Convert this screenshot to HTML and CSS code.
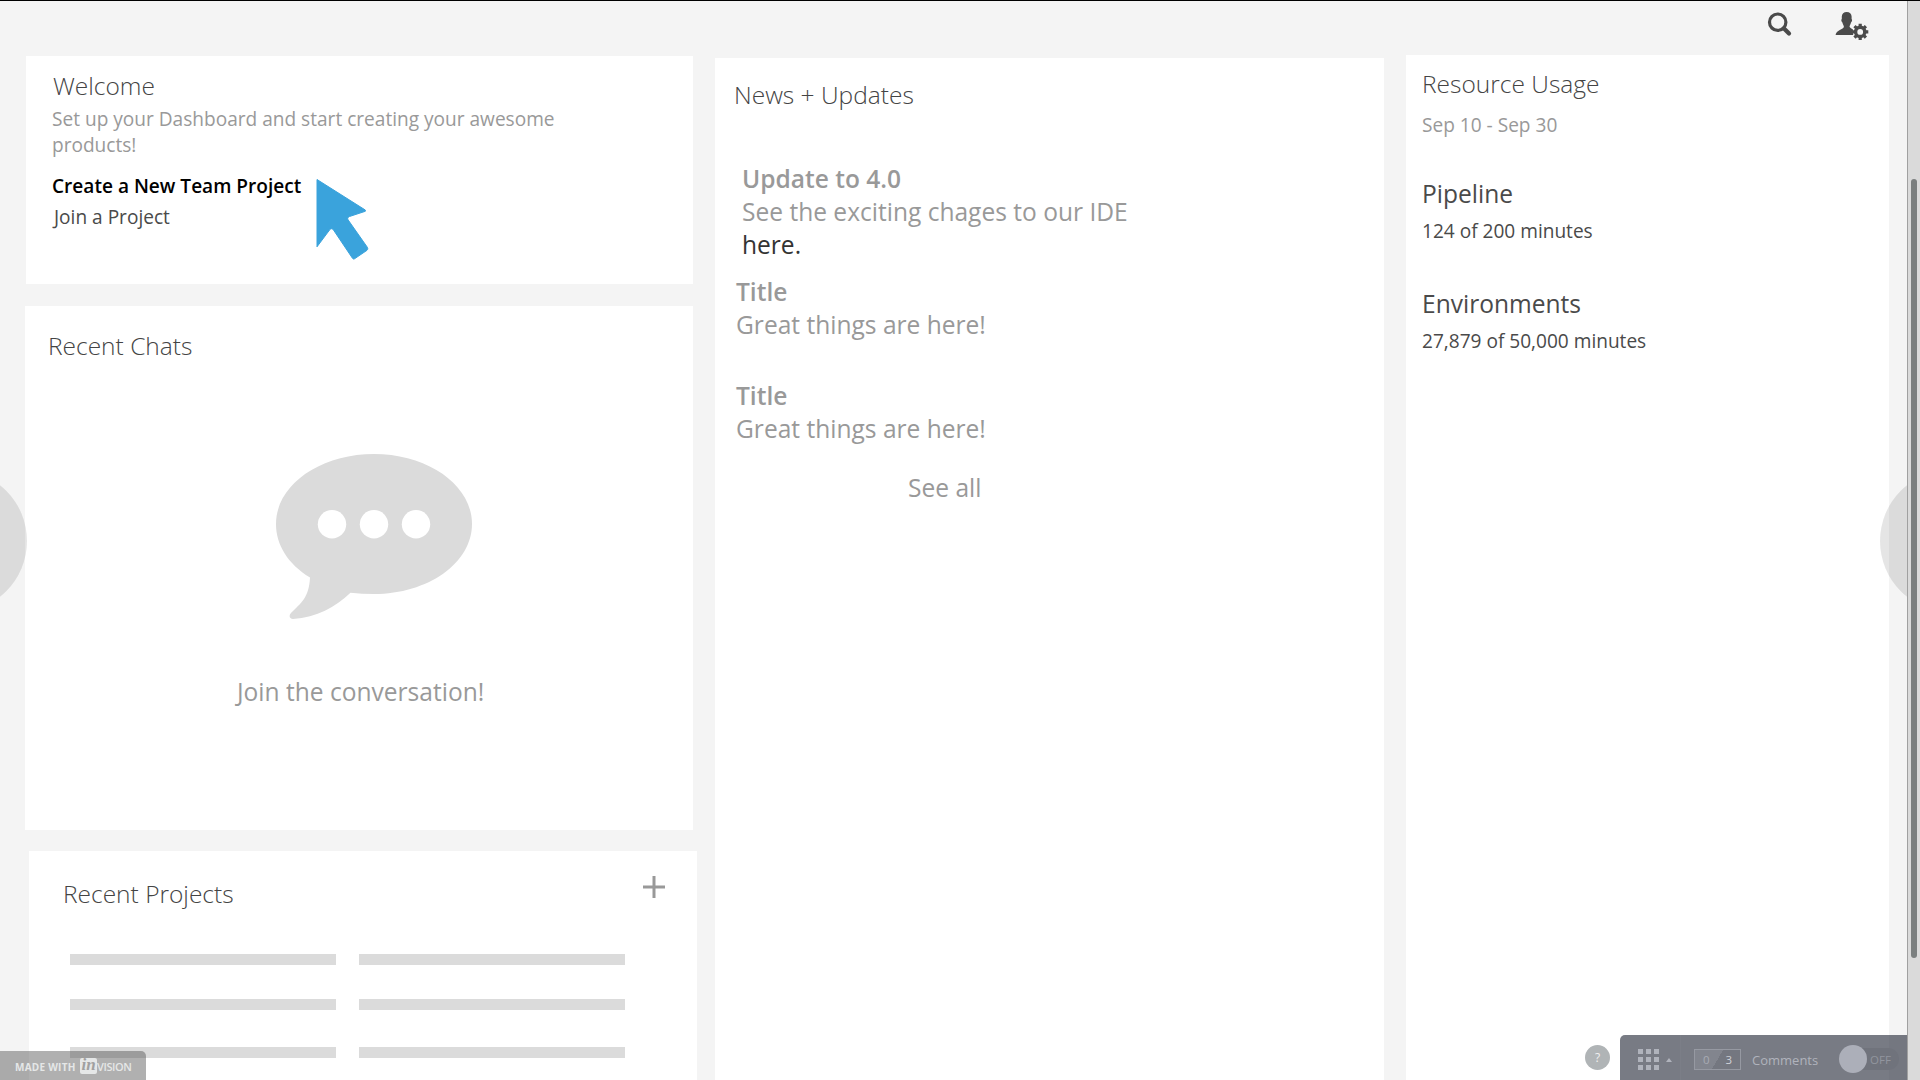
FILE: index.html
```
<!DOCTYPE html>
<html lang="en">
<head>
<meta charset="utf-8">
<title>Dashboard</title>
<link rel="stylesheet" href="styles.css">
</head>
<body>
<div class="viewport">
  <div class="page">
    <header class="topbar">
      <svg class="icon-search" width="26" height="26" viewBox="0 0 26 26" fill="none" stroke="#4a4a4a">
        <circle cx="10.7" cy="11.2" r="8.2" stroke-width="3.2"/>
        <path d="M17 17.5L22 22.500" stroke-width="4.2" stroke-linecap="round"/>
      </svg>
      <svg class="icon-user" width="34" height="30" viewBox="0 0 34 30">
        <path fill="#4a4a4a" d="M11.7 1C14.6 1 16.6 2.7 16.6 5.6V8C17.6 8.5 16.9 11 16 11.4C15.5 13.5 14.5 14.6 14.5 15.5C14.8 17.8 21 18.5 21.5 24H.6C1 19.5 8.6 18.300 8.900 15.800C8.900 14.600 7.900 13.500 7.400 11.400C6.500 11 5.800 8.500 6.800 8V5.600C6.800 2.700 8.800 1 11.700 1Z"/>
        <circle cx="25.2" cy="20.9" r="7.5" fill="#f4f4f4"/>
        <g stroke="#4a4a4a" fill="none">
          <circle cx="25.2" cy="20.9" r="4.6" stroke-width="3.4"/>
          <path stroke-width="3.2" d="M25.2 12.8V16M25.2 25.8V29M17.1 20.9H20.3M30.1 20.9H33.3M19.5 15.2L21.7 17.4M28.7 24.4L30.9 26.6M30.900 15.200L28.700 17.400M21.700 24.400L19.500 26.600"/>
        </g>
      </svg>
    </header>
    <main class="columns">
      <div class="column-left">
        <section class="card welcome">
          <h2 class="heading">Welcome</h2>
          <p class="intro">Set up your Dashboard and start creating your awesome products!</p>
          <a class="create">Create a New Team Project</a>
          <a class="join">Join a Project</a>
          <svg class="cursor" width="56" height="84" viewBox="0 0 56 84">
            <path fill="#3aa3dc" stroke="#3aa3dc" stroke-linejoin="round" d="M1 1.5L49.300 32L49.300 33.300L33.500 38.500C31.500 39.400 31.200 40.600 32.200 42L51.500 69.500C52 70.700 51.800 71.500 51 72.300L38.500 80.800C37.600 81.300 37 81 36.500 80.300L17.500 52C16.300 50.300 15 50.300 13.700 51.800L1 68.800Z"/>
          </svg>
        </section>
        <section class="card chats">
          <h2 class="heading">Recent Chats</h2>
          <svg class="bubble" width="198" height="168" viewBox="0 0 198 168">
            <path fill="#dbdbdb" d="M99 1C153 1 197 32 197 71S153 141 99 141Q87 141 75.500 139.700C60 154 42 164.500 18 166C14.500 166 13.500 162.500 16 160C26 150 34 145 35 124.500C13 111 1 92 1 71C1 32 45 1 99 1Z"/>
            <g fill="#fff"><circle cx="57" cy="71.300" r="14.200"/><circle cx="99" cy="71.300" r="14.200"/><circle cx="141" cy="71.300" r="14.200"/></g>
          </svg>
          <p class="conversation">Join the conversation!</p>
        </section>
        <section class="card projects">
          <div class="projects-head">
            <h2 class="heading">Recent Projects</h2>
            <svg class="plus" width="22" height="22" viewBox="0 0 22 22"><path d="M11 0V22M0 11H22" stroke="#999" stroke-width="3"/></svg>
          </div>
          <div class="bars">
            <i></i><i></i><i></i><i></i><i></i><i></i>
          </div>
        </section>
      </div>
      <section class="card news">
        <h2 class="heading">News + Updates</h2>
        <article class="item featured">
          <h3>Update to 4.0</h3>
          <p>See the exciting chages to our IDE<br><a>here.</a></p>
        </article>
        <article class="item">
          <h3>Title</h3>
          <p>Great things are here!</p>
        </article>
        <article class="item second">
          <h3>Title</h3>
          <p>Great things are here!</p>
        </article>
        <a class="see-all">See all</a>
      </section>
      <section class="card usage">
        <h2 class="heading">Resource Usage</h2>
        <p class="period">Sep 10 - Sep 30</p>
        <h3>Pipeline</h3>
        <p class="amount">124 of 200 minutes</p>
        <h3>Environments</h3>
        <p class="amount">27,879 of 50,000 minutes</p>
      </section>
    </main>
    <span class="nav-circle prev"></span>
    <span class="nav-circle next"></span>
    <div class="badge"><span>MADE WITH</span><em>in</em><b>VISION</b></div>
    <div class="help">?</div>
    <div class="toolbar">
      <div class="screens">
        <svg width="21" height="21" viewBox="0 0 21 21">
          <path fill="#b0b3bc" d="M0 0h5v5H0zM8 0h5v5H8zM16 0h5v5h-5zM0 8h5v5H0zM8 8h5v5H8zM16 8h5v5h-5zM0 16h5v5H0zM8 16h5v5H8zM16 16h5v5h-5z"/>
        </svg>
        <svg class="caret" width="6" height="4" viewBox="0 0 6 4"><path fill="#b0b3bc" d="M0 4L3 0L6 4Z"/></svg>
      </div>
      <div class="comments">
        <div class="count"><span>0</span><span class="total">3</span></div>
        <span class="label">Comments</span>
        <div class="toggle"><i></i><span>OFF</span></div>
      </div>
    </div>
  </div>
  <div class="scrollbar"><div class="thumb"></div></div>
</div>
</body>
</html>
```
FILE: styles.css
```
* { box-sizing: border-box; }
body, h2, h3, p { margin: 0; }
body {
  font-family: "Open Sans", sans-serif;
  background: #f4f4f4;
  overflow: hidden;
}
svg { display: block; flex: none; }
.viewport {
  display: flex;
  height: 1080px;
  border-top: 1px solid #000;
}
.page {
  position: relative;
  width: 1907px;
  overflow: hidden;
}
.topbar {
  display: flex;
  justify-content: flex-end;
  gap: 42px;
  height: 54px;
  padding: 10px 38px 0 0;
}
.columns {
  display: flex;
  height: 1025px;
}
.card { background: #fff; }
.heading {
  font-weight: 300;
  font-size: 24.5px;
  line-height: 33px;
  color: #444;
}

.column-left { width: 715px; padding-top: 1px; }
.welcome {
  position: relative;
  display: flex;
  flex-direction: column;
  width: 667px;
  height: 228px;
  margin-left: 26px;
  padding: 13px 26px 0;
  font-size: 19.09px;
  line-height: 26px;
}
.welcome .heading { margin-left: 1px; }
.intro { width: 540px; margin-top: 4px; color: #999; }
.create { margin-top: 15px; font-weight: 600; color: #000; }
.join { margin: 5px 0 0 2px; color: #4a4a4a; }
.cursor { position: absolute; left: 290px; top: 122px; }

.chats {
  width: 668px;
  height: 524px;
  margin: 22px 0 0 25px;
  padding: 23px 23px 0;
}
.bubble { margin: 91px 0 0 227px; }
.conversation {
  margin: 54px 0 0 189px;
  font-size: 24.55px;
  line-height: 33px;
  color: #999;
}

.projects {
  width: 668px;
  height: 229px;
  margin: 21px 0 0 29px;
  padding: 25px 32px 0 34px;
}
.projects-head { display: flex; justify-content: space-between; }
.projects .heading { position: relative; top: 1px; }
.bars {
  display: grid;
  grid-template-columns: 266px 266px;
  grid-template-rows: 11px 11px 14px;
  align-items: end;
  gap: 34px 23px;
  padding: 45px 0 0 7px;
}
.bars i { height: 11px; background: #dbdbdb; }

.news {
  width: 669px;
  margin: 3px 22px 0 0;
  padding: 20px 19px 0;
  font-size: 24.55px;
  line-height: 33px;
  color: #999;
}
.item { margin: 14px 0 0 2px; }
.item h3 { font-size: inherit; font-weight: 600; }
.item a { color: #333; }
.item.featured { margin: 51px 0 0 8px; }
.item.second { margin-top: 38px; }
.see-all { display: block; margin: 26px 0 0 174px; }

.usage {
  width: 483px;
  padding: 12px 16px 0;
  color: #4a4a4a;
  font-size: 19.09px;
  line-height: 26px;
}
.period { margin-top: 12px; color: #999; }
.usage h3 {
  margin-top: 39px;
  font-size: 24.55px;
  font-weight: 400;
  line-height: 33px;
}
.amount { margin-top: 8px; }
.amount + h3 { margin-top: 43px; }

.nav-circle {
  position: absolute;
  top: 469px;
  width: 142px;
  height: 142px;
  border-radius: 50%;
  background: rgba(0, 0, 0, .1);
}
.prev { left: -115px; }
.next { left: 1880px; }

.badge {
  position: absolute;
  left: 0;
  bottom: 0;
  display: flex;
  align-items: center;
  width: 146px;
  height: 29px;
  padding: 3px 0 0 15px;
  border-top-right-radius: 5px;
  background: rgba(80, 80, 80, .45);
  color: #e5e7e7;
  font-size: 10px;
  font-weight: 700;
  white-space: nowrap;
}
.badge span { width: 65px; letter-spacing: .25px; }
.badge em {
  width: 17px;
  height: 16px;
  margin-top: -2px;
  border-radius: 2px;
  background: #e5e7e7;
  color: #a0a0a0;
  font: italic 700 17px/14px "Liberation Serif", serif;
  text-align: center;
}
.badge b { font-size: 11px; font-weight: 600; margin-top: -2px; letter-spacing: -.4px; }

.help {
  position: absolute;
  left: 1585px;
  top: 1044px;
  width: 25px;
  height: 25px;
  border-radius: 50%;
  background: #b0b4b6;
  color: #f0f0f0;
  font-size: 12px;
  line-height: 25px;
  text-align: center;
}
.toolbar {
  position: absolute;
  right: 0;
  bottom: 0;
  display: flex;
  width: 287px;
  height: 45px;
  border-top-left-radius: 5px;
  background: linear-gradient(to right, #787b84 269px, #747780 269px);
  color: #b0b3bc;
}
.screens {
  display: flex;
  gap: 7px;
  width: 61px;
  padding: 14px 0 0 18px;
  border-right: 1px solid #7b7e87;
}
.caret { margin-top: 9px; }
.comments {
  display: flex;
  align-items: center;
  padding: 2px 0 0 13px;
  font-size: 13px;
}
.count {
  display: flex;
  width: 47px;
  height: 21px;
  margin-top: 2px;
  border: 1px solid #9699a2;
  background: linear-gradient(120deg, #82858e 50%, #747780 50%);
  font-size: 11.5px;
  line-height: 20px;
  text-align: center;
}
.count span { flex: 1; color: #a8abb4; }
.count .total { color: #d0d2d8; }
.label { width: 87px; margin: 3px 0 0 11px; }
.toggle {
  display: flex;
  align-items: center;
  width: 60px;
  height: 22px;
  border-radius: 11px;
  background: #70737c;
  font-size: 11.5px;
  color: #92959e;
}
.toggle i {
  width: 28px;
  height: 28px;
  margin-right: 3px;
  border-radius: 50%;
  background: #acafb9;
}
.toggle span { margin-top: 2px; }

.scrollbar {
  flex: 1;
  padding: 178px 0 0 3px;
  border-left: 1px solid #a0a0a0;
  background: #dadada;
}
.thumb {
  width: 6px;
  height: 779px;
  border-radius: 3px;
  background: #7b7f7f;
}
```
